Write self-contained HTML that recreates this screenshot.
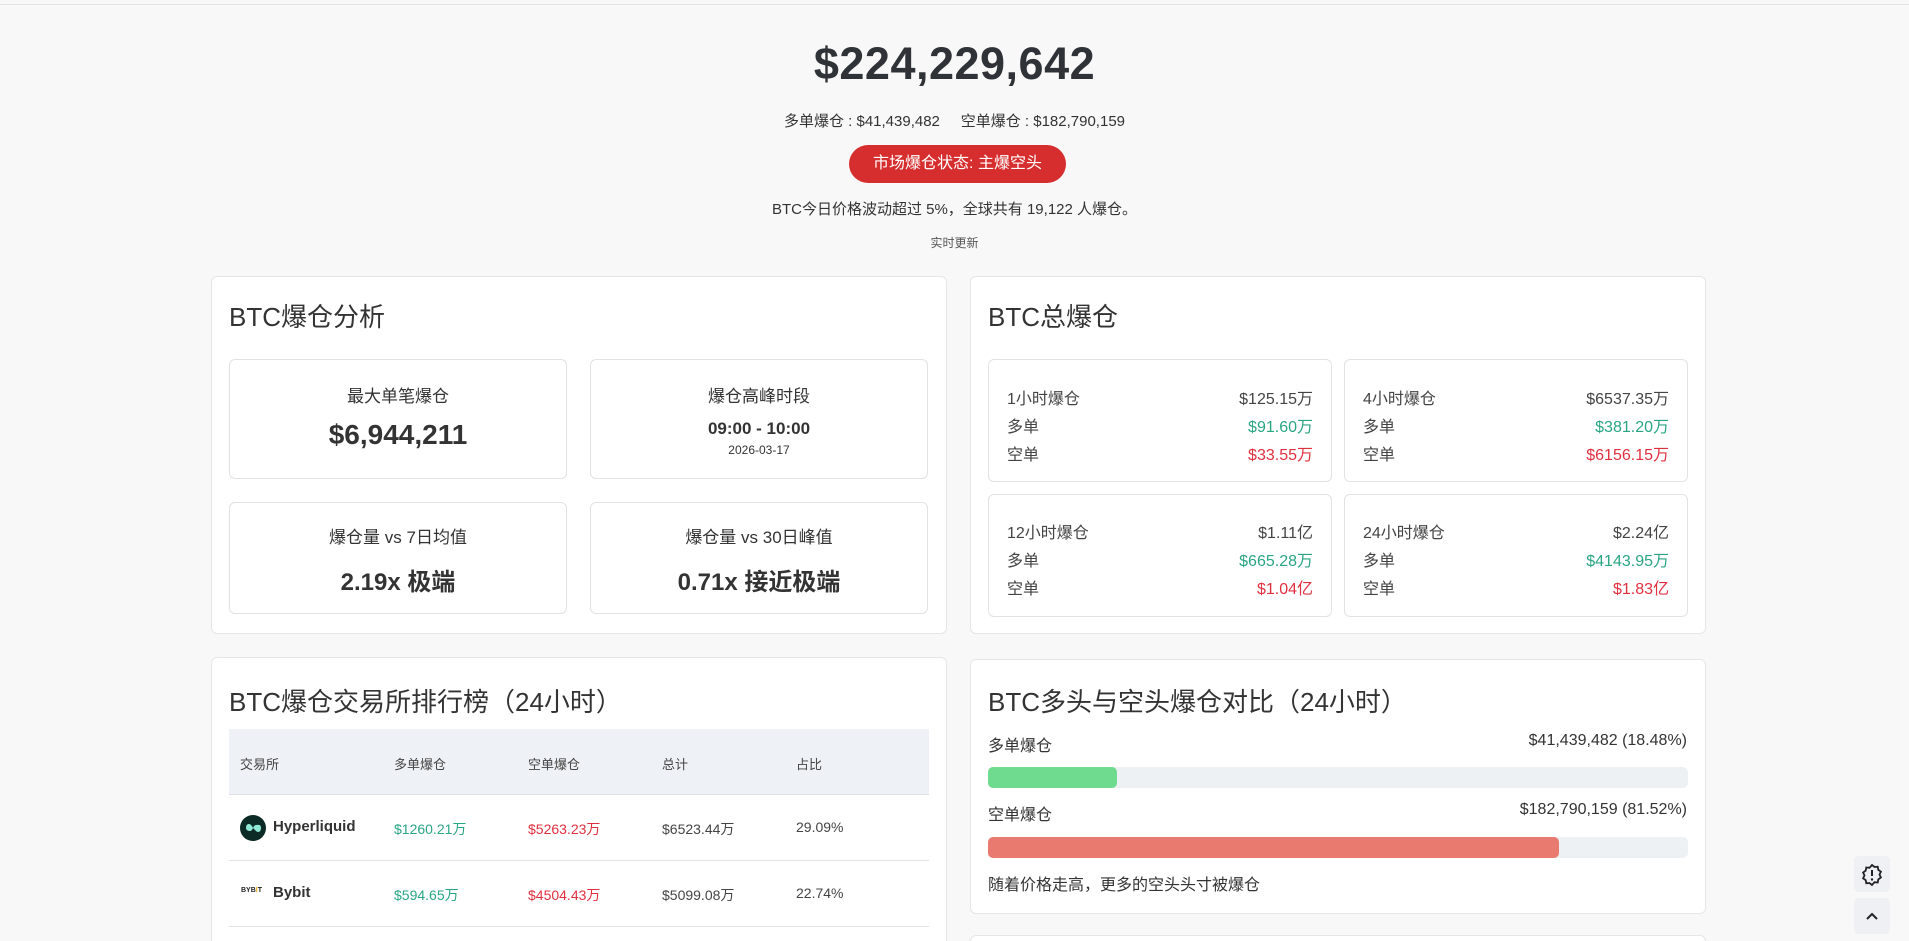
<!DOCTYPE html>
<html><head><meta charset="utf-8"><style>
*{box-sizing:border-box;margin:0;padding:0}
html,body{width:1909px;height:941px;overflow:hidden}
body{background:#f8f8f8;font-family:"Liberation Sans","Noto Sans CJK SC",sans-serif;color:#333}
#w{position:relative;width:1909px;height:941px;overflow:hidden}
.a{position:absolute}
.c{text-align:center}
.card{position:absolute;background:#fff;border:1px solid #e6e6e6;border-radius:6px}
.box{position:absolute;background:#fff;border:1px solid #e2e2e2;border-radius:6px}
.t{font-size:26px;color:#333}
.row{position:absolute;left:18px;right:18px;font-size:16px;color:#444;display:flex;justify-content:space-between}
.th{font-size:13px;color:#444}
.td{font-size:14px;color:#444}
.g{color:#2aa582 !important}.r{color:#e0303f !important}
</style></head><body><div id="w">
<div class="a" style="left:0;top:4px;width:1909px;height:1px;background:#e4e4e4"></div>
<div class="a c" style="left:0;width:1909px;top:38px;font-size:45px;font-weight:bold;color:#2f3337;letter-spacing:0.5px">$224,229,642</div>
<div class="a c" style="left:0;width:1909px;top:110px;font-size:15px;color:#333">多单爆仓 : $41,439,482 &nbsp;&nbsp;&nbsp; 空单爆仓 : $182,790,159</div>
<div class="a c" style="left:849px;top:145px;width:217px;height:38px;border-radius:19px;background:#d62e2e;color:#fff;font-size:16px;line-height:38px">市场爆仓状态: 主爆空头</div>
<div class="a c" style="left:0;width:1909px;top:198px;font-size:15px;color:#333">BTC今日价格波动超过 5%，全球共有 19,122 人爆仓。</div>
<div class="a c" style="left:0;width:1909px;top:234px;font-size:12px;color:#555">实时更新</div>

<div class="card" style="left:211px;top:276px;width:736px;height:358px">
 <div class="a t" style="left:17px;top:20px">BTC爆仓分析</div>
 <div class="box c" style="left:17px;top:82px;width:338px;height:120px"><div style="margin-top:22px;font-size:17px">最大单笔爆仓</div><div style="margin-top:12px;font-size:28px;font-weight:bold;color:#333">$6,944,211</div></div>
 <div class="box c" style="left:378px;top:82px;width:338px;height:120px"><div style="margin-top:22px;font-size:17px">爆仓高峰时段</div><div style="margin-top:12px;font-size:17px;font-weight:bold">09:00 - 10:00</div><div style="margin-top:4px;font-size:12px">2026-03-17</div></div>
 <div class="box c" style="left:17px;top:225px;width:338px;height:112px"><div style="margin-top:20px;font-size:17px">爆仓量 vs 7日均值</div><div style="margin-top:14px;font-size:24px;font-weight:bold">2.19x 极端</div></div>
 <div class="box c" style="left:378px;top:225px;width:338px;height:112px"><div style="margin-top:20px;font-size:17px">爆仓量 vs 30日峰值</div><div style="margin-top:14px;font-size:24px;font-weight:bold">0.71x 接近极端</div></div>
</div>

<div class="card" style="left:970px;top:276px;width:736px;height:358px">
 <div class="a t" style="left:17px;top:20px">BTC总爆仓</div>
 <div class="box" style="left:17px;top:82px;width:344px;height:123px">
  <div class="row" style="top:25px"><span>1小时爆仓</span><span>$125.15万</span></div>
  <div class="row" style="top:53px"><span>多单</span><span class="g">$91.60万</span></div>
  <div class="row" style="top:81px"><span>空单</span><span class="r">$33.55万</span></div>
 </div>
 <div class="box" style="left:373px;top:82px;width:344px;height:123px">
  <div class="row" style="top:25px"><span>4小时爆仓</span><span>$6537.35万</span></div>
  <div class="row" style="top:53px"><span>多单</span><span class="g">$381.20万</span></div>
  <div class="row" style="top:81px"><span>空单</span><span class="r">$6156.15万</span></div>
 </div>
 <div class="box" style="left:17px;top:217px;width:344px;height:123px">
  <div class="row" style="top:24px"><span>12小时爆仓</span><span>$1.11亿</span></div>
  <div class="row" style="top:52px"><span>多单</span><span class="g">$665.28万</span></div>
  <div class="row" style="top:80px"><span>空单</span><span class="r">$1.04亿</span></div>
 </div>
 <div class="box" style="left:373px;top:217px;width:344px;height:123px">
  <div class="row" style="top:24px"><span>24小时爆仓</span><span>$2.24亿</span></div>
  <div class="row" style="top:52px"><span>多单</span><span class="g">$4143.95万</span></div>
  <div class="row" style="top:80px"><span>空单</span><span class="r">$1.83亿</span></div>
 </div>
</div>

<div class="card" style="left:211px;top:657px;width:736px;height:400px">
 <div class="a t" style="left:17px;top:24px">BTC爆仓交易所排行榜（24小时）</div>
 <div class="a" style="left:17px;top:71px;width:700px;height:66px;background:#eef1f5;border-bottom:1px solid #dde0e4"></div>
 <div class="a th" style="left:28px;top:96px">交易所</div>
 <div class="a th" style="left:182px;top:96px">多单爆仓</div>
 <div class="a th" style="left:316px;top:96px">空单爆仓</div>
 <div class="a th" style="left:450px;top:96px">总计</div>
 <div class="a th" style="left:584px;top:96px">占比</div>
 <div class="a" style="left:17px;top:202px;width:700px;height:1px;background:#e2e2e2"></div>
 <div class="a" style="left:17px;top:268px;width:700px;height:1px;background:#e2e2e2"></div>
 <div class="a" style="left:28px;top:157px;width:26px;height:26px;border-radius:13px;background:#0c2b27"><svg width="26" height="26" viewBox="0 0 26 26"><path d="M6 13c0-4 3-5 5-3s2 3 2 3 1-3 3-3 5-1 5 3-3 5-5 3-3-3-3-3-1 3-3 3-4-1-4-3z" fill="#8fe8d3"/></svg></div>
 <div class="a" style="left:61px;top:160px;font-size:15px;font-weight:bold;color:#333">Hyperliquid</div>
 <div class="a td g" style="left:182px;top:161px">$1260.21万</div>
 <div class="a td r" style="left:316px;top:161px">$5263.23万</div>
 <div class="a td" style="left:450px;top:161px">$6523.44万</div>
 <div class="a td" style="left:584px;top:161px">29.09%</div>
 <div class="a" style="left:29px;top:229px;font-size:7px;font-weight:bold;color:#222">BYB<span style="color:#f7a600">I</span>T</div>
 <div class="a" style="left:61px;top:226px;font-size:15px;font-weight:bold;color:#333">Bybit</div>
 <div class="a td g" style="left:182px;top:227px">$594.65万</div>
 <div class="a td r" style="left:316px;top:227px">$4504.43万</div>
 <div class="a td" style="left:450px;top:227px">$5099.08万</div>
 <div class="a td" style="left:584px;top:227px">22.74%</div>
</div>

<div class="card" style="left:970px;top:659px;width:736px;height:255px">
 <div class="a t" style="left:17px;top:22px">BTC多头与空头爆仓对比（24小时）</div>
 <div class="a" style="left:17px;top:72px;font-size:16px">多单爆仓</div>
 <div class="a" style="right:18px;top:72px;font-size:16px">$41,439,482 (18.48%)</div>
 <div class="a" style="left:17px;top:107px;width:700px;height:21px;border-radius:5px;background:#eef1f4"><div style="width:129px;height:21px;border-radius:5px;background:#6fdb8f"></div></div>
 <div class="a" style="left:17px;top:141px;font-size:16px">空单爆仓</div>
 <div class="a" style="right:18px;top:141px;font-size:16px">$182,790,159 (81.52%)</div>
 <div class="a" style="left:17px;top:177px;width:700px;height:21px;border-radius:5px;background:#eef1f4"><div style="width:571px;height:21px;border-radius:5px;background:#e97a70"></div></div>
 <div class="a" style="left:17px;top:211px;font-size:16px">随着价格走高，更多的空头头寸被爆仓</div>
</div>
<div class="card" style="left:970px;top:935px;width:736px;height:30px"></div>

<div class="a" style="left:1854px;top:856px;width:36px;height:36px;border-radius:5px;background:#eef0f3"><svg width="36" height="36" viewBox="0 0 36 36"><path d="M18 9l2.5 2 3.2-.3.6 3.1 2.6 1.9-1.4 2.9 1.4 2.9-2.6 1.9-.6 3.1-3.2-.3L18 29l-2.5-2-3.2.3-.6-3.1-2.6-1.9 1.4-2.9-1.4-2.9 2.6-1.9.6-3.1 3.2.3z" fill="none" stroke="#222" stroke-width="1.8"/><path d="M18 14v6" stroke="#222" stroke-width="2"/><circle cx="18" cy="23.5" r="1.2" fill="#222"/></svg></div>
<div class="a" style="left:1854px;top:898px;width:36px;height:36px;border-radius:5px;background:#eef0f3"><svg width="36" height="36" viewBox="0 0 36 36"><path d="M13 21l5-5 5 5" fill="none" stroke="#222" stroke-width="2"/></svg></div>
</div></body></html>
